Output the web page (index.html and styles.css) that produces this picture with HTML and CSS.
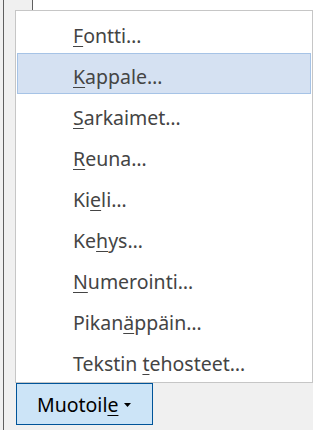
FILE: index.html
```html
<!DOCTYPE html>
<html lang="fi">
<head>
<meta charset="utf-8">
<title>Muotoile</title>
<link rel="stylesheet" href="styles.css">
</head>
<body>
<div class="screen">
  <div class="doc"></div>
  <div class="btnrow">
    <button class="btn">Muotoil<u>e</u><svg class="caret" width="7" height="4" viewBox="0 0 7 4"><path d="M0 0H7L3.5 4Z" fill="#000"/></svg></button>
  </div>
  <ul class="menu">
    <li class="item"><u>F</u>ontti…</li>
    <li class="item active"><u>K</u>appale…</li>
    <li class="item"><u>S</u>arkaimet…</li>
    <li class="item"><u>R</u>euna…</li>
    <li class="item">Ki<u>e</u>li…</li>
    <li class="item">Ke<u>h</u>ys…</li>
    <li class="item"><u>N</u>umerointi…</li>
    <li class="item">Pikan<u>ä</u>ppäin…</li>
    <li class="item">Tekstin <u>t</u>ehosteet…</li>
  </ul>
</div>
</body>
</html>
```
FILE: styles.css
```css
html, body {
  margin: 0;
  padding: 0;
  background: #f0f0f0;
}
.screen {
  position: relative;
  margin-left: 3px;
  border-left: 1px solid #5f5f5f;
  height: 430px;
  display: flex;
  flex-direction: column;
  font-family: "Noto Sans", "Open Sans", sans-serif;
}
.doc {
  height: 383px;
  margin-left: 28px;
  border-left: 1px solid #5f5f5f;
  background: #ffffff;
}
.btnrow {
  padding-left: 12px;
}
.btn {
  display: flex;
  align-items: center;
  width: 137px;
  height: 42px;
  margin: 0;
  padding: 1px 0 0 20px;
  box-sizing: border-box;
  background: #cce4f7;
  border: 1px solid #005499;
  border-radius: 0;
  font-family: "Noto Sans", "Open Sans", sans-serif;
  font-size: 19.5px;
  color: #000;
}
.btn u {
  text-underline-offset: 3px;
  text-decoration-thickness: 1px;
}
.caret {
  margin-left: 6px;
  margin-top: 1px;
}
.menu {
  position: absolute;
  left: 11px;
  top: 10px;
  width: 298px;
  box-sizing: border-box;
  margin: 0;
  padding: 1px;
  list-style: none;
  background: #ffffff;
  border: 1px solid #c6c6c6;
}
.item {
  height: 41px;
  box-sizing: border-box;
  border: 1px solid transparent;
  padding: 7px 0 0 55px;
  line-height: 32px;
  font-size: 19.5px;
  color: #444444;
  white-space: nowrap;
}
.item u {
  text-underline-offset: 3px;
  text-decoration-thickness: 1px;
}
.item.active {
  background: #d5e1f2;
  border-color: #a6c3e6;
}
```
